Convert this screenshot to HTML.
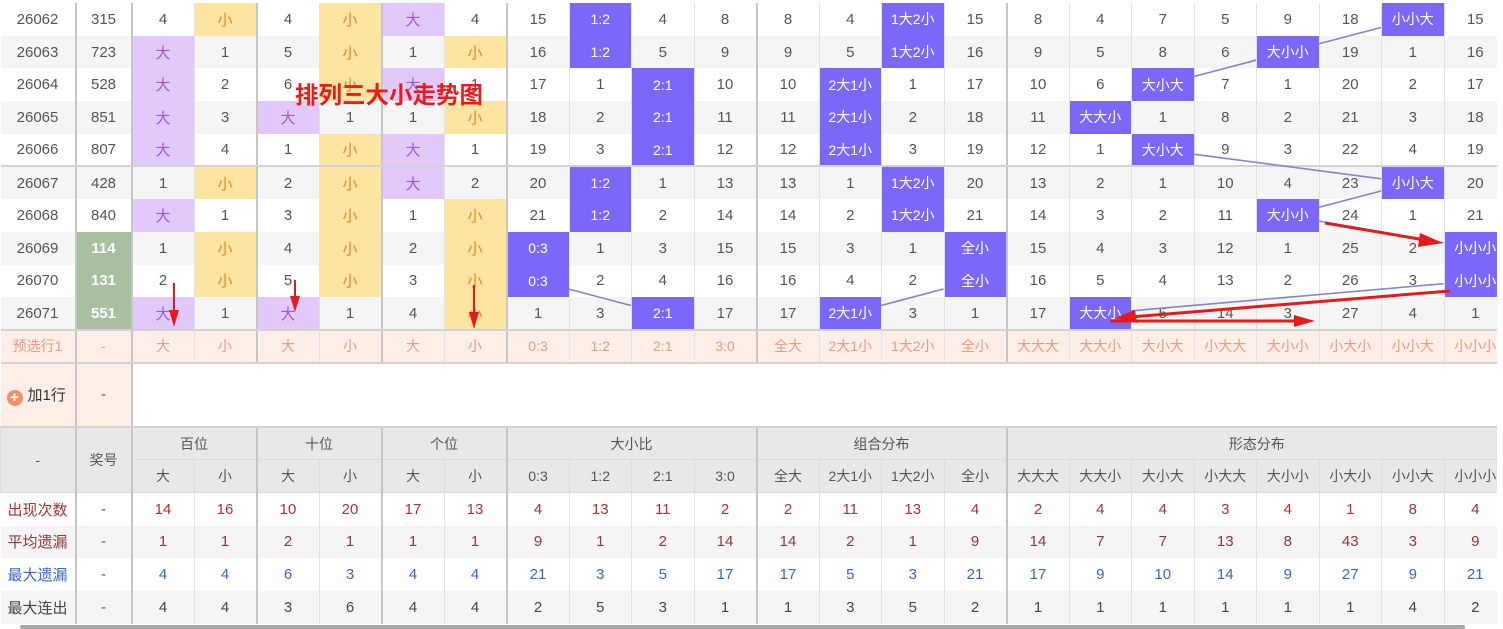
<!DOCTYPE html>
<html><head><meta charset="utf-8"><style>
*{margin:0;padding:0;box-sizing:border-box}
body{width:1503px;height:629px;overflow:hidden;background:#fff;font-family:"Liberation Sans","Noto Sans CJK SC",sans-serif;font-size:15px;color:#555;position:relative}
#wrap{position:absolute;left:0;top:0;width:1497px;height:624px;overflow:hidden;padding-top:3px;border-top:0}
table{border-collapse:collapse;table-layout:fixed;width:1506px}
td{text-align:center;vertical-align:middle;border-left:1px solid #e2e2e2;border-right:1px solid #e2e2e2;height:32.7px;white-space:nowrap;overflow:hidden;padding:0}
td:first-child{border-left:none}
col.g{border-left:2px solid #c6c6c6}
tr.s td{background:#f5f5f5}
tr.sep td{border-top:2px solid #d2d2d2}
td.p{background:#e1c9fb!important;color:#9a5cc9}
td.y{background:#fee4a1!important;color:#e5892a}
td.b{background:#7b68f8!important;color:#fff;font-size:14px}
td.gr{background:#a6c0a0!important;color:#fff;font-weight:bold;font-size:15px}
tr.pre td{background:#fdeee8;color:#ec9a80;border-top:2px solid #d2d2d2;border-bottom:2px solid #d2d2d2;height:33px;font-size:14px}
tr.add td{height:64px}
tr.h td{background:#e8e8e8;color:#555;height:33px;border:1px solid #dcdcdc;font-size:14px}
tr.h1 td{border-top:2px solid #d2d2d2}
tr.st td{height:32.7px}
.r{color:#a33}
.bl{color:#3a68b8}
.d{color:#445}
#ov{position:absolute;left:0;top:0;pointer-events:none}
#title{position:absolute;left:295px;top:78px;font-size:23.5px;font-weight:bold;color:#e81c1c;font-family:"Noto Sans CJK SC",sans-serif;line-height:30px;white-space:nowrap}
#sb{position:absolute;left:20px;top:625px;width:1445px;height:4px;background:#a8a8a8;border-radius:2px}
</style></head><body>
<div id="wrap">
<table>
<colgroup><col style="width:75px"><col class="g" style="width:56px">
<col class="g" style="width:62.5px"><col style="width:62.5px">
<col class="g" style="width:62.5px"><col style="width:62.5px">
<col class="g" style="width:62.5px"><col style="width:62.5px">
<col class="g" style="width:62.5px"><col style="width:62.5px"><col style="width:62.5px"><col style="width:62.5px">
<col class="g" style="width:62.5px"><col style="width:62.5px"><col style="width:62.5px"><col style="width:62.5px">
<col class="g" style="width:62.5px"><col style="width:62.5px"><col style="width:62.5px"><col style="width:62.5px"><col style="width:62.5px"><col style="width:62.5px"><col style="width:62.5px"><col style="width:62.5px">
</colgroup>
<tr><td>26062</td><td>315</td><td>4</td><td class="y">小</td><td>4</td><td class="y">小</td><td class="p">大</td><td>4</td><td>15</td><td class="b">1:2</td><td>4</td><td>8</td><td>8</td><td>4</td><td class="b">1大2小</td><td>15</td><td>8</td><td>4</td><td>7</td><td>5</td><td>9</td><td>18</td><td class="b">小小大</td><td>15</td></tr>
<tr class="s"><td>26063</td><td>723</td><td class="p">大</td><td>1</td><td>5</td><td class="y">小</td><td>1</td><td class="y">小</td><td>16</td><td class="b">1:2</td><td>5</td><td>9</td><td>9</td><td>5</td><td class="b">1大2小</td><td>16</td><td>9</td><td>5</td><td>8</td><td>6</td><td class="b">大小小</td><td>19</td><td>1</td><td>16</td></tr>
<tr><td>26064</td><td>528</td><td class="p">大</td><td>2</td><td>6</td><td class="y">小</td><td class="p">大</td><td>1</td><td>17</td><td>1</td><td class="b">2:1</td><td>10</td><td>10</td><td class="b">2大1小</td><td>1</td><td>17</td><td>10</td><td>6</td><td class="b">大小大</td><td>7</td><td>1</td><td>20</td><td>2</td><td>17</td></tr>
<tr class="s"><td>26065</td><td>851</td><td class="p">大</td><td>3</td><td class="p">大</td><td>1</td><td>1</td><td class="y">小</td><td>18</td><td>2</td><td class="b">2:1</td><td>11</td><td>11</td><td class="b">2大1小</td><td>2</td><td>18</td><td>11</td><td class="b">大大小</td><td>1</td><td>8</td><td>2</td><td>21</td><td>3</td><td>18</td></tr>
<tr><td>26066</td><td>807</td><td class="p">大</td><td>4</td><td>1</td><td class="y">小</td><td class="p">大</td><td>1</td><td>19</td><td>3</td><td class="b">2:1</td><td>12</td><td>12</td><td class="b">2大1小</td><td>3</td><td>19</td><td>12</td><td>1</td><td class="b">大小大</td><td>9</td><td>3</td><td>22</td><td>4</td><td>19</td></tr>
<tr class="s sep"><td>26067</td><td>428</td><td>1</td><td class="y">小</td><td>2</td><td class="y">小</td><td class="p">大</td><td>2</td><td>20</td><td class="b">1:2</td><td>1</td><td>13</td><td>13</td><td>1</td><td class="b">1大2小</td><td>20</td><td>13</td><td>2</td><td>1</td><td>10</td><td>4</td><td>23</td><td class="b">小小大</td><td>20</td></tr>
<tr><td>26068</td><td>840</td><td class="p">大</td><td>1</td><td>3</td><td class="y">小</td><td>1</td><td class="y">小</td><td>21</td><td class="b">1:2</td><td>2</td><td>14</td><td>14</td><td>2</td><td class="b">1大2小</td><td>21</td><td>14</td><td>3</td><td>2</td><td>11</td><td class="b">大小小</td><td>24</td><td>1</td><td>21</td></tr>
<tr class="s"><td>26069</td><td class="gr">114</td><td>1</td><td class="y">小</td><td>4</td><td class="y">小</td><td>2</td><td class="y">小</td><td class="b">0:3</td><td>1</td><td>3</td><td>15</td><td>15</td><td>3</td><td>1</td><td class="b">全小</td><td>15</td><td>4</td><td>3</td><td>12</td><td>1</td><td>25</td><td>2</td><td class="b">小小小</td></tr>
<tr><td>26070</td><td class="gr">131</td><td>2</td><td class="y">小</td><td>5</td><td class="y">小</td><td>3</td><td class="y">小</td><td class="b">0:3</td><td>2</td><td>4</td><td>16</td><td>16</td><td>4</td><td>2</td><td class="b">全小</td><td>16</td><td>5</td><td>4</td><td>13</td><td>2</td><td>26</td><td>3</td><td class="b">小小小</td></tr>
<tr class="s"><td>26071</td><td class="gr">551</td><td class="p">大</td><td>1</td><td class="p">大</td><td>1</td><td>4</td><td class="y">小</td><td>1</td><td>3</td><td class="b">2:1</td><td>17</td><td>17</td><td class="b">2大1小</td><td>3</td><td>1</td><td>17</td><td class="b">大大小</td><td>5</td><td>14</td><td>3</td><td>27</td><td>4</td><td>1</td></tr>
<tr class="pre"><td>预选行1</td><td>-</td><td>大</td><td>小</td><td>大</td><td>小</td><td>大</td><td>小</td><td>0:3</td><td>1:2</td><td>2:1</td><td>3:0</td><td>全大</td><td>2大1小</td><td>1大2小</td><td>全小</td><td>大大大</td><td>大大小</td><td>大小大</td><td>小大大</td><td>大小小</td><td>小大小</td><td>小小大</td><td>小小小</td></tr>
<tr class="add"><td style="background:#fdeee8;color:#333;font-size:15px;text-align:left;padding-left:6px"><span style="display:inline-block;width:16px;height:16px;border-radius:50%;background:#f0906a;color:#fff;font-size:15px;line-height:16px;text-align:center;font-weight:bold;vertical-align:-2px;margin-right:5px">+</span>加1行</td><td style="background:#fdeee8">-</td><td colspan="22" style="background:#fff"></td></tr>
<tr class="h h1"><td rowspan="2">-</td><td rowspan="2">奖号</td><td colspan="2">百位</td><td colspan="2">十位</td><td colspan="2">个位</td><td colspan="4">大小比</td><td colspan="4">组合分布</td><td colspan="8">形态分布</td></tr>
<tr class="h"><td>大</td><td>小</td><td>大</td><td>小</td><td>大</td><td>小</td><td>0:3</td><td>1:2</td><td>2:1</td><td>3:0</td><td>全大</td><td>2大1小</td><td>1大2小</td><td>全小</td><td>大大大</td><td>大大小</td><td>大小大</td><td>小大大</td><td>大小小</td><td>小大小</td><td>小小大</td><td>小小小</td></tr>
<tr class="st r"><td>出现次数</td><td style="color:#555">-</td><td>14</td><td>16</td><td>10</td><td>20</td><td>17</td><td>13</td><td>4</td><td>13</td><td>11</td><td>2</td><td>2</td><td>11</td><td>13</td><td>4</td><td>2</td><td>4</td><td>4</td><td>3</td><td>4</td><td>1</td><td>8</td><td>4</td></tr>
<tr class="st s" style="color:#8a3a3a"><td>平均遗漏</td><td style="color:#555">-</td><td>1</td><td>1</td><td>2</td><td>1</td><td>1</td><td>1</td><td>9</td><td>1</td><td>2</td><td>14</td><td>14</td><td>2</td><td>1</td><td>9</td><td>14</td><td>7</td><td>7</td><td>13</td><td>8</td><td>43</td><td>3</td><td>9</td></tr>
<tr class="st bl"><td>最大遗漏</td><td style="color:#555">-</td><td>4</td><td>4</td><td>6</td><td>3</td><td>4</td><td>4</td><td>21</td><td>3</td><td>5</td><td>17</td><td>17</td><td>5</td><td>3</td><td>21</td><td>17</td><td>9</td><td>10</td><td>14</td><td>9</td><td>27</td><td>9</td><td>21</td></tr>
<tr class="st s d"><td>最大连出</td><td style="color:#555">-</td><td>4</td><td>4</td><td>3</td><td>6</td><td>4</td><td>4</td><td>2</td><td>5</td><td>3</td><td>1</td><td>1</td><td>3</td><td>5</td><td>2</td><td>1</td><td>1</td><td>1</td><td>1</td><td>1</td><td>1</td><td>4</td><td>2</td></tr>
</table>
</div>
<svg id="ov" width="1503" height="629">
<g stroke="#8585c8" stroke-width="1.6" fill="none">
<line x1="568.5" y1="289" x2="631" y2="305.5"/>
<line x1="943.5" y1="289" x2="881" y2="305.5"/>
<line x1="1381" y1="27.5" x2="1318.5" y2="43.9"/>
<line x1="1256" y1="60.2" x2="1193.5" y2="76.6"/>
<line x1="1193.5" y1="154.2" x2="1381" y2="178.8"/>
<line x1="1381" y1="191" x2="1318.5" y2="207.4"/>
<line x1="1318.5" y1="221" x2="1443.5" y2="242.8"/>
<line x1="1443.5" y1="283.7" x2="1131" y2="310.9"/>
</g>
<g fill="#e51b1b" stroke="#e51b1b">
<line x1="1325" y1="223" x2="1425" y2="240" stroke-width="3"/>
<polygon points="1443,243 1420,233 1418,247" stroke="none"/>
<line x1="1450" y1="291" x2="1130" y2="317" stroke-width="3"/>
<polygon points="1115,318 1135,310 1137,323" stroke="none"/>
<line x1="1110" y1="321" x2="1295" y2="321" stroke-width="3"/>
<polygon points="1315,321 1294,315 1294,327" stroke="none"/>
<line x1="174" y1="283" x2="174" y2="312" stroke-width="2"/>
<polygon points="174,327 169,310 179,310" stroke="none"/>
<line x1="295" y1="280" x2="295" y2="298" stroke-width="2"/>
<polygon points="295,312 290,296 300,296" stroke="none"/>
<line x1="474" y1="285" x2="474" y2="314" stroke-width="2"/>
<polygon points="474,329 469,312 479,312" stroke="none"/>
</g>
</svg>
<div id="title">排列三大小走势图</div>
<div id="sb"></div>
</body></html>
